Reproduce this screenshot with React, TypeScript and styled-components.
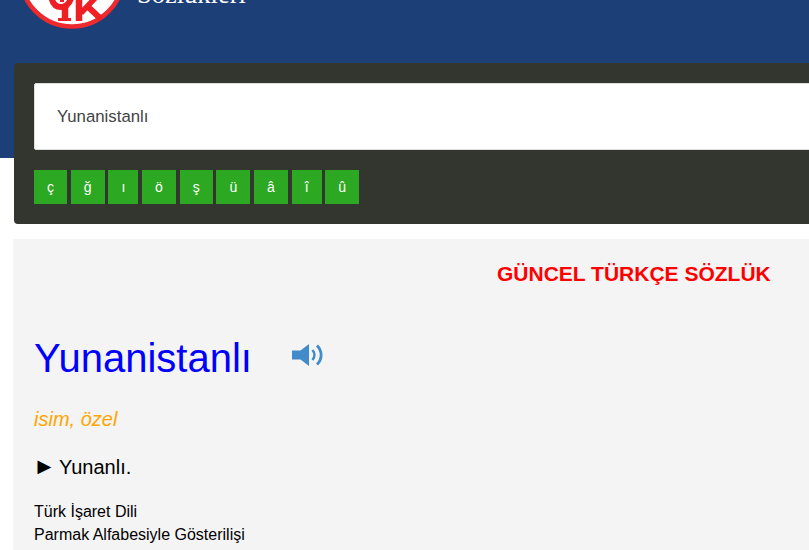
import { createGlobalStyle, styled } from 'styled-components';

const LETTERS = ['ç', 'ğ', 'ı', 'ö', 'ş', 'ü', 'â', 'î', 'û'];

const Logo = () => (
  <LogoSvg viewBox="0 0 108 108">
    <circle cx="54" cy="54" r="51.5" fill="#fff" stroke="#ee2a2e" strokeWidth="4.5" />
    <g fill="none" stroke="#ee2024" strokeWidth="6">
      <path d="M33 74 C34 83 38 86 43 86 C48 86 52 83 54 74" />
      <path d="M44 74 V81" strokeWidth="4" />
      <path d="M47 86 V99" strokeWidth="6.5" />
      <path d="M40 98.5 H53" strokeWidth="3" />
      <path d="M61 74 V100" strokeWidth="6.5" />
      <path d="M63 92 L80 74" strokeWidth="5.5" />
      <path d="M68 84 L83 98" strokeWidth="6" />
    </g>
  </LogoSvg>
);

const SpeakerIcon = () => (
  <Speaker viewBox="0 0 32 24">
    <path d="M0 7.5 H8.5 L17 1 V23 L8.5 16.5 H0 Z" fill="#428bca" />
    <path d="M20.5 7 C23 10 23 14 20.5 17" fill="none" stroke="#428bca" strokeWidth="2.6" />
    <path d="M25 2.5 C30.5 8 30.5 16 25 21.5" fill="none" stroke="#428bca" strokeWidth="2.8" />
  </Speaker>
);

export default function App() {
  return (
    <Page>
      <GlobalStyle />
      <Hero>
        <Brand>
          <Logo />
          <BrandName>Sözlükleri</BrandName>
        </Brand>
      </Hero>
      <SearchPanel>
        <SearchInput readOnly value="Yunanistanlı" />
        <Keyboard>
          {LETTERS.map((letter) => (
            <KeyButton key={letter}>{letter}</KeyButton>
          ))}
        </Keyboard>
      </SearchPanel>
      <ResultCard>
        <SourceTitle>GÜNCEL TÜRKÇE SÖZLÜK</SourceTitle>
        <WordRow>
          <Word>Yunanistanlı</Word>
          <SpeakerIcon />
        </WordRow>
        <WordKind>isim, özel</WordKind>
        <Meaning>
          <Marker>►</Marker>Yunanlı.
        </Meaning>
        <SignInfo>
          Türk İşaret Dili
          <br />
          Parmak Alfabesiyle Gösterilişi
        </SignInfo>
      </ResultCard>
    </Page>
  );
}

const GlobalStyle = createGlobalStyle`
  html, body {
    margin: 0;
    padding: 0;
    background: #fff;
    overflow: hidden;
  }
  * {
    box-sizing: border-box;
  }
`;

const Page = styled.div`
  width: 809px;
  height: 550px;
  overflow: hidden;
  font-family: 'Liberation Sans', Arial, sans-serif;
`;

const Hero = styled.header`
  height: 158px;
  background: #1c3f77;
  overflow: hidden;
`;

const Brand = styled.div`
  display: flex;
  align-items: flex-start;
  gap: 11px;
  margin-top: -79px;
  padding-left: 18px;
`;

const LogoSvg = styled.svg`
  width: 108px;
  height: 108px;
  flex: none;
`;

const BrandName = styled.div`
  margin-top: 58px;
  font-family: 'Liberation Serif', 'Times New Roman', serif;
  font-size: 26.5px;
  line-height: 30px;
  color: #fff;
`;

const SearchPanel = styled.section`
  width: 900px;
  height: 161px;
  margin: -95px 0 0 14px;
  padding: 20px;
  background: #33352f;
  border-radius: 4px;
`;

const SearchInput = styled.input`
  display: block;
  width: 100%;
  height: 67px;
  padding: 0 22px;
  border: 1px solid #ddd;
  border-radius: 2px;
  background: #fff;
  font-family: inherit;
  font-size: 16.8px;
  color: #444;
  outline: none;
`;

const Keyboard = styled.div`
  display: flex;
  gap: 3.8px;
  margin-top: 20px;
`;

const KeyButton = styled.button`
  height: 34px;
  padding: 0 13px;
  border: 0;
  background: #2ca822;
  font-family: inherit;
  font-size: 14px;
  color: #fff;
`;

const ResultCard = styled.main`
  width: 900px;
  height: 320px;
  margin: 15px 0 0 13px;
  padding: 23px 21px;
  background: #f4f4f4;
`;

const SourceTitle = styled.h2`
  margin: 0 0 0 463px;
  font-size: 21px;
  line-height: 24px;
  font-weight: bold;
  color: #f00;
`;

const WordRow = styled.div`
  display: flex;
  align-items: flex-start;
  gap: 40px;
  margin-top: 49px;
`;

const Word = styled.h1`
  margin: 0;
  font-size: 40px;
  line-height: 46px;
  font-weight: normal;
  color: #00f;
`;

const Speaker = styled.svg`
  width: 32px;
  height: 24px;
  margin-top: 8px;
`;

const WordKind = styled.div`
  margin-top: 26px;
  font-size: 20px;
  line-height: 24px;
  font-style: italic;
  color: #ffa500;
`;

const Meaning = styled.div`
  margin-top: 24px;
  font-size: 20px;
  line-height: 24px;
  color: #000;
`;

const Marker = styled.span`
  display: inline-block;
  width: 25px;
  margin-left: -1px;
  margin-right: 1px;
  font-size: 23px;
  line-height: 0;
`;

const SignInfo = styled.div`
  margin-top: 21px;
  font-size: 16px;
  line-height: 23px;
  color: #000;
`;
